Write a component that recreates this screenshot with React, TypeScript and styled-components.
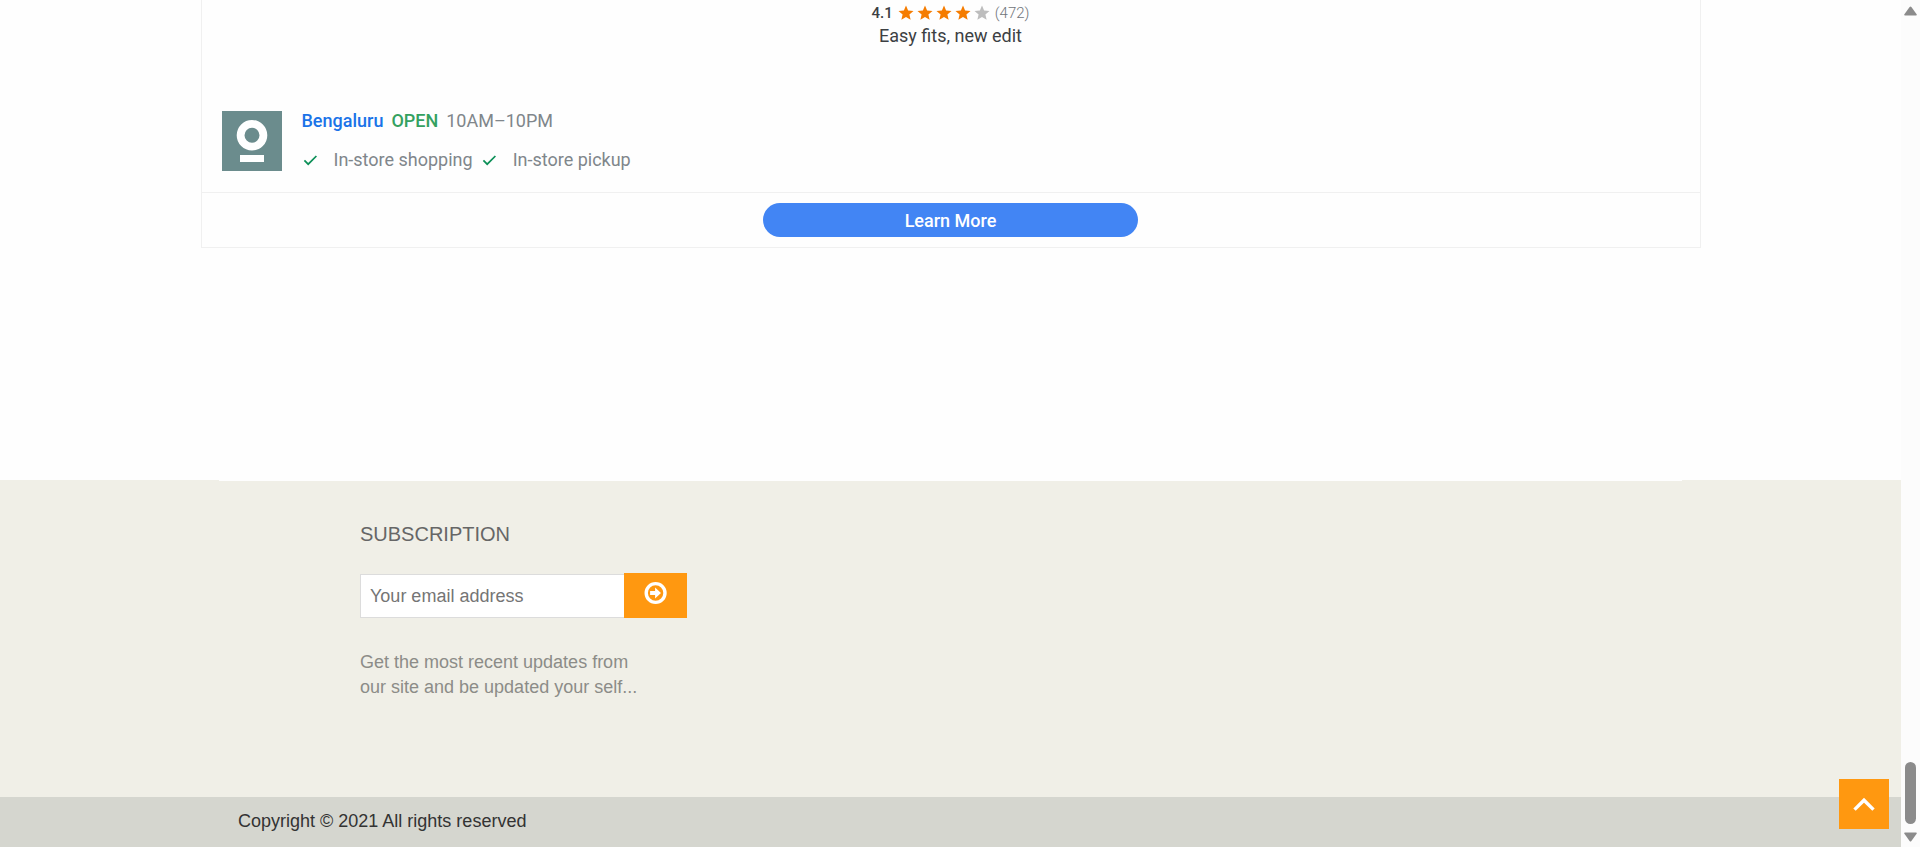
import React from "react";
import styled, { createGlobalStyle } from "styled-components";

const GlobalStyle = createGlobalStyle`
  *, *::before, *::after { box-sizing: border-box; }
  body {
    margin: 0;
    background: #fefefe;
    font-family: "Liberation Sans", Arial, sans-serif;
    font-size: 18px;
    line-height: 25px;
  }
  h3, p, ul { margin: 0; padding: 0; }
`;

const Shell = styled.div`
  display: flex;
  min-height: 100vh;
`;

const Page = styled.div`
  flex: 1;
  min-width: 0;
  display: flex;
  flex-direction: column;
`;

const Main = styled.main`
  flex: 1;
  padding-bottom: 232px;
`;

const Card = styled.article`
  max-width: 1500px;
  margin: 0 auto;
  border: 1px solid #f0f0f0;
  border-top: 0;
  font-family: Roboto, sans-serif;
`;

const Summary = styled.div`
  display: flex;
  flex-direction: column;
  align-items: center;
  height: 111px;
  padding-top: 2px;
  color: #3c4043;
`;

const Rating = styled.div`
  display: flex;
  align-items: center;
  gap: 4px;
  font-size: 15px;
  line-height: 22px;
`;

const Score = styled.span`
  font-weight: 500;
`;

const Stars = styled.span`
  display: flex;
  gap: 1px;
`;

const Count = styled.span`
  font-weight: 300;
  color: #70757a;
`;

const Tagline = styled.p`
  line-height: 24px;
`;

const Store = styled.section`
  display: flex;
  gap: 20px;
  padding: 0 20px 21px;
`;

const StoreDetails = styled.div`
  display: flex;
  flex-direction: column;
  gap: 19px;
  line-height: 20px;
  color: #80868b;
`;

const StoreLine = styled.div`
  display: flex;
  gap: 8px;
`;

const StoreLink = styled.a`
  color: #1a73e8;
  font-weight: 500;
  text-decoration: none;
`;

const OpenLabel = styled.span`
  color: #34a160;
  font-weight: 500;
`;

const Features = styled.ul`
  display: flex;
  gap: 8px;
  list-style: none;
`;

const Feature = styled.li`
  display: flex;
  align-items: center;
  gap: 16px;
`;

const CardAction = styled.div`
  display: flex;
  justify-content: center;
  padding: 10px 0;
  border-top: 1px solid #f0f0f0;
`;

const LearnMore = styled.button`
  width: 25%;
  height: 34px;
  padding: 1px 0 0;
  border: 0;
  border-radius: 17px;
  background: #4285f4;
  color: #fff;
  font: 500 18px/33px Roboto, sans-serif;
  cursor: pointer;
`;

const Footer = styled.footer`
  background: #f0efe7;
`;

const FooterInner = styled.div`
  max-width: 1463px;
  margin: 0 auto;
  padding: 40px 141px 97px;
  border-top: 1px solid #fefefe;
`;

const Heading = styled.h3`
  font-size: 20px;
  line-height: 26px;
  font-weight: 400;
  color: #666;
`;

const SubscribeForm = styled.form`
  display: flex;
  align-items: flex-end;
  margin: 26px 0 32px;
`;

const EmailInput = styled.input`
  width: 264px;
  height: 44px;
  padding: 0 9px;
  border: 1px solid #dcdcdc;
  border-right: 0;
  border-radius: 0;
  background: #fff;
  color: #555;
  font: 18px "Liberation Sans", Arial, sans-serif;
  &::placeholder { color: #757575; opacity: 1; }
`;

const SubmitButton = styled.button`
  display: flex;
  justify-content: center;
  width: 63px;
  height: 45px;
  padding: 8px 0;
  border: 0;
  background: #ff9810;
  cursor: pointer;
`;

const Note = styled.p`
  max-width: 280px;
  color: #8c8c88;
`;

const CopyrightBar = styled.div`
  background: #d5d6cf;
`;

const Copyright = styled.p`
  max-width: 1463px;
  margin: 0 auto;
  padding: 12px 19px 13px;
  color: #333;
`;

const BackToTop = styled.button`
  position: fixed;
  right: 31px;
  bottom: 18px;
  display: flex;
  align-items: center;
  justify-content: center;
  width: 50px;
  height: 50px;
  padding: 0;
  border: 0;
  background: #ff9810;
  cursor: pointer;
`;

const ScrollTrack = styled.div`
  display: flex;
  flex-direction: column;
  align-items: center;
  width: 19px;
  padding: 6px 0 5px;
  background: #fcfcfc;
`;

const ScrollThumb = styled.div`
  width: 11px;
  height: 62px;
  margin: auto 0 8px;
  border-radius: 6px;
  background: #8b8b8b;
`;

const Star = ({ filled }: { filled: boolean }) => (
  <svg width="18" height="18" viewBox="0 0 24 24" fill={filled ? "#f57c00" : "#bdbdbd"}>
    <path d="M12 17.27 18.18 21l-1.64-7.03L22 9.24l-7.19-.61L12 2 9.19 8.63 2 9.24l5.46 4.73L5.82 21z" />
  </svg>
);

const Check = () => (
  <svg width="16" height="16" viewBox="0 0 16 16" fill="none" stroke="#0d9058" strokeWidth="1.7">
    <path d="M2.4 8.4 6.2 12.2 14.4 4" />
  </svg>
);

const StoreLogo = () => (
  <svg width="60" height="60" viewBox="0 0 60 60" role="img" aria-label="Store logo">
    <rect width="60" height="60" fill="#6b8c8d" />
    <circle cx="30" cy="24.3" r="11.4" fill="none" stroke="#fff" strokeWidth="7.8" />
    <rect x="18" y="44" width="24" height="7" fill="#fff" />
  </svg>
);

const ArrowCircle = () => (
  <svg width="24" height="24" viewBox="0 0 24 24">
    <circle cx="11.6" cy="12" r="9.4" fill="none" stroke="#fff" strokeWidth="3.4" />
    <path d="M6.1 10h5V6.6L17 12l-5.9 5.4V14h-5z" fill="#fff" />
  </svg>
);

const ScrollArrow = ({ down }: { down?: boolean }) => (
  <svg width="13" height="10" viewBox="0 0 13 10" fill="#8b8b8b">
    {down ? (
      <path d="M1 .5h11q1.2.2.6 1.3L7.4 8.9q-.9 1-1.8 0L.4 1.8Q-.2.7 1 .5z" />
    ) : (
      <path d="M1 9.5h11q1.2-.2.6-1.3L7.4 1.1q-.9-1-1.8 0L.4 8.2Q-.2 9.3 1 9.5z" />
    )}
  </svg>
);

export default function App() {
  return (
    <>
      <GlobalStyle />
      <Shell>
        <Page>
          <Main>
            <Card>
              <Summary>
                <Rating>
                  <Score>4.1</Score>
                  <Stars>
                    {[1, 2, 3, 4, 5].map((n) => (
                      <Star key={n} filled={n <= 4} />
                    ))}
                  </Stars>
                  <Count>(472)</Count>
                </Rating>
                <Tagline>Easy fits, new edit</Tagline>
              </Summary>
              <Store>
                <StoreLogo />
                <StoreDetails>
                  <StoreLine>
                    <StoreLink href="#bengaluru">Bengaluru</StoreLink>
                    <OpenLabel>OPEN</OpenLabel>
                    <span>10AM–10PM</span>
                  </StoreLine>
                  <Features>
                    {["In-store shopping", "In-store pickup"].map((label) => (
                      <Feature key={label}>
                        <Check />
                        {label}
                      </Feature>
                    ))}
                  </Features>
                </StoreDetails>
              </Store>
              <CardAction>
                <LearnMore type="button">Learn More</LearnMore>
              </CardAction>
            </Card>
          </Main>
          <Footer>
            <FooterInner>
              <Heading>SUBSCRIPTION</Heading>
              <SubscribeForm onSubmit={(e) => e.preventDefault()}>
                <EmailInput type="email" placeholder="Your email address" aria-label="Your email address" />
                <SubmitButton type="submit" aria-label="Subscribe">
                  <ArrowCircle />
                </SubmitButton>
              </SubscribeForm>
              <Note>Get the most recent updates from our site and be updated your self...</Note>
            </FooterInner>
            <CopyrightBar>
              <Copyright>Copyright © 2021 All rights reserved</Copyright>
            </CopyrightBar>
          </Footer>
        </Page>
        <ScrollTrack aria-hidden="true">
          <ScrollArrow />
          <ScrollThumb />
          <ScrollArrow down />
        </ScrollTrack>
      </Shell>
      <BackToTop type="button" aria-label="Back to top" onClick={() => window.scrollTo(0, 0)}>
        <svg width="24" height="16" viewBox="0 0 24 16" fill="none" stroke="#fff" strokeWidth="3.4">
          <path d="M2.5 13.6 12 4.2 21.5 13.6" />
        </svg>
      </BackToTop>
    </>
  );
}
